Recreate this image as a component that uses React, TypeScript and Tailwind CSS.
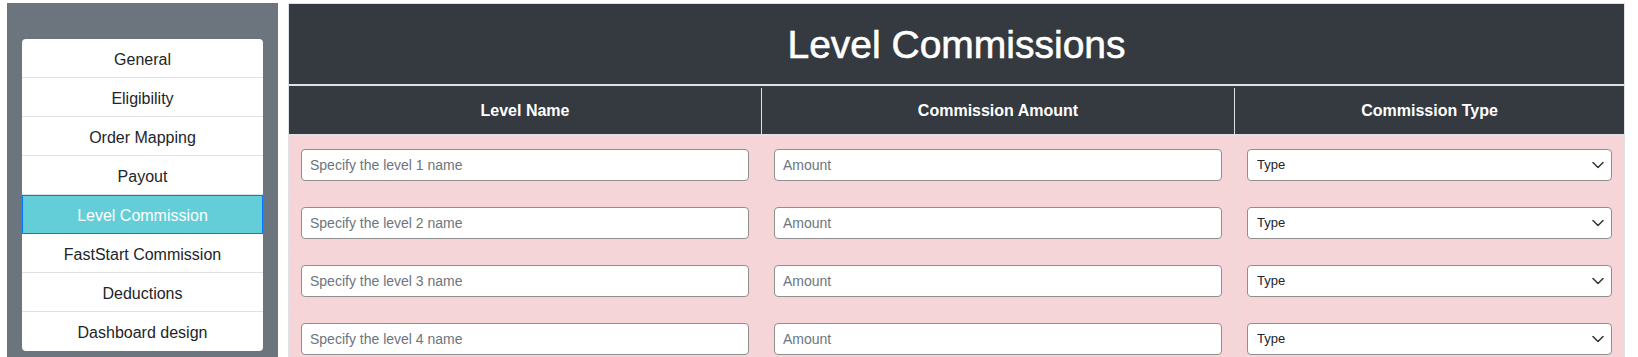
import React from "react";

const menu = [
  "General",
  "Eligibility",
  "Order Mapping",
  "Payout",
  "Level Commission",
  "FastStart Commission",
  "Deductions",
  "Dashboard design",
];

function Chevron() {
  return (
    <svg width="12" height="7" viewBox="0 0 12 7" fill="none" className="absolute right-[8px] top-1/2 -translate-y-1/2 pointer-events-none">
      <path d="M1 1l5 5 5-5" stroke="#343a40" strokeWidth="1.6" strokeLinecap="round" strokeLinejoin="round" />
    </svg>
  );
}

export default function App() {
  return (
    <div
      className="flex h-[357px] w-[1638px] overflow-hidden bg-white pt-[3px] pl-[7px]"
      style={{ fontFamily: '"Liberation Sans", Arial, sans-serif' }}
    >
      <aside className="w-[271px] shrink-0 bg-[#6c757d] px-[15px] pt-[36px]">
        <div className="flex flex-col rounded-[4px] bg-white">
          {menu.map((m, i) => {
            const active = m === "Level Commission";
            const last = i === menu.length - 1;
            return (
              <div
                key={m}
                className={
                  active
                    ? "flex h-[39px] items-center justify-center border border-[#007bff] bg-[#63ced8] pt-[3px] text-[16px] text-white"
                    : last
                    ? "flex h-[39px] items-center justify-center pt-[3px] text-[16px] text-[#212529]"
                    : "flex h-[39px] items-center justify-center border-b border-[#dee2e6] pt-[3px] text-[16px] text-[#212529]"
                }
              >
                {m}
              </div>
            );
          })}
        </div>
      </aside>

      <main className="ml-[10px] w-[1337px] shrink-0 self-start border border-[#dee2e6]">
        <div className="flex h-[82px] items-center justify-center border-b-2 border-[#dee2e6] bg-[#343a40] pt-[2px]">
          <h1 className="text-[39px] font-medium leading-[48px] text-white [-webkit-text-stroke:0.6px_white]">
            Level Commissions
          </h1>
        </div>
        <div className="grid h-[50px] grid-cols-[473px_473px_389px] border-b-2 border-[#dee2e6] bg-[#343a40] pt-[2px] text-[16px] font-bold text-white">
          <div className="flex items-center justify-center border-r border-[#dee2e6]">Level Name</div>
          <div className="flex items-center justify-center border-r border-[#dee2e6]">Commission Amount</div>
          <div className="flex items-center justify-center">Commission Type</div>
        </div>
        {[1, 2, 3, 4].map((n) => (
          <div
            key={n}
            className="grid h-[58px] grid-cols-[473px_473px_389px] border-b border-[#ecdadd] bg-[#f5d5d8]"
          >
            <div className="flex items-center border-r border-[#ecdadd] px-[12px]">
              <input
                className="h-[32px] w-full rounded-[4px] border border-[#8f8f8f] bg-white px-[8px] text-[14px] text-[#495057] outline-none placeholder:text-[#6c757d]"
                placeholder={`Specify the level ${n} name`}
              />
            </div>
            <div className="flex items-center border-r border-[#ecdadd] px-[12px]">
              <input
                className="h-[32px] w-full rounded-[4px] border border-[#8f8f8f] bg-white px-[8px] text-[14px] text-[#495057] outline-none placeholder:text-[#6c757d]"
                placeholder="Amount"
              />
            </div>
            <div className="flex items-center px-[12px]">
              <div className="relative w-full">
                <select
                  defaultValue=""
                  className="h-[32px] w-full appearance-none rounded-[4px] border border-[#8f8f8f] bg-white pl-[9px] pr-[24px] text-[13px] text-[#212529] outline-none"
                >
                  <option value="">Type</option>
                </select>
                <Chevron />
              </div>
            </div>
          </div>
        ))}
      </main>
    </div>
  );
}
